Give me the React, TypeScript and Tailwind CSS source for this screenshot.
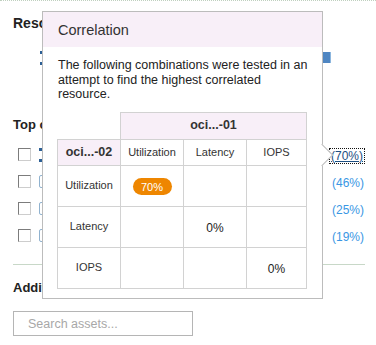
import React from 'react'

const rows = [
  { pct: '(70%)', active: true },
  { pct: '(46%)', active: false },
  { pct: '(25%)', active: false },
  { pct: '(19%)', active: false },
]

const metrics = ['Utilization', 'Latency', 'IOPS']

// values shown in the matrix, keyed "row-col"
const cells: Record<string, { text: string; badge?: boolean }> = {
  '0-0': { text: '70%', badge: true },
  '1-1': { text: '0%' },
  '2-2': { text: '0%' },
}

function Checkbox() {
  return (
    <span className="block w-[13px] h-[13px] border border-[#7c7c7c] border-r-[#cdcdcd] border-b-[#cdcdcd] bg-white" />
  )
}

function Marker() {
  return (
    <span className="flex flex-col justify-between w-[4px] h-[14px]">
      <span className="block w-[3px] h-[3px] bg-[#2c5f95]" />
      <span className="block w-[3px] h-[3px] bg-[#2c5f95]" />
    </span>
  )
}

function CorrelationPopover() {
  return (
    <div className="absolute left-[42px] top-[10px] w-[281px] h-[288px] border border-[#bcbcbc] bg-white">
      {/* Header */}
      <div className="h-[35px] bg-[#f8eff8] pl-[15px] pt-px text-[14.5px] leading-[35px] text-[#333]">
        Correlation
      </div>

      {/* Body */}
      <div className="px-[15px] pt-[11px]">
        <p className="-mr-[3px] text-[12.5px] leading-[14.5px] text-[#222]">
          The following combinations were tested in an attempt to find the highest correlated resource.
        </p>

        <table className="mt-[10px] -ml-px w-[249px] table-fixed border-collapse text-[#333]">
          <colgroup>
            <col className="w-[63px]" />
            <col className="w-[63px]" />
            <col className="w-[63px]" />
            <col className="w-[60px]" />
          </colgroup>
          <tbody>
            <tr className="h-[27px]">
              <td className="border-0" />
              <td colSpan={3} className="border border-[#d2d2d2] bg-[#f8eff8] text-center text-[12.5px] font-bold">
                oci...-01
              </td>
            </tr>
            <tr className="h-[26px]">
              <td className="border border-[#d2d2d2] bg-[#f8eff8] text-center text-[12.5px] font-bold">oci...-02</td>
              {metrics.map((m) => (
                <td key={m} className="border border-[#d2d2d2] text-center text-[11px]">
                  {m}
                </td>
              ))}
            </tr>
            {metrics.map((m, r) => (
              <tr key={m} className="h-[41px]">
                <td className="border border-[#d2d2d2] text-center text-[11px]">{m}</td>
                {metrics.map((_, c) => {
                  const cell = cells[`${r}-${c}`]
                  return (
                    <td key={c} className="border border-[#d2d2d2] text-center align-middle">
                      {cell?.badge ? (
                        <span className="inline-flex items-center justify-center w-[39px] h-[17px] rounded-full bg-[#ee8600] text-[11px] text-white">
                          {cell.text}
                        </span>
                      ) : cell ? (
                        <span className="text-[12px] text-[#222]">{cell.text}</span>
                      ) : null}
                    </td>
                  )
                })}
              </tr>
            ))}
          </tbody>
        </table>
      </div>

      {/* Pointer to the selected percentage */}
      <span className="absolute left-[271px] top-[135px] w-[16px] h-[16px] rotate-45 border-t border-r border-[#bcbcbc] bg-white" />
    </div>
  )
}

export default function App() {
  return (
    <div className="relative w-[376px] h-[345px] overflow-hidden bg-white border-t border-dotted border-[#bfd0bf] font-['Liberation_Sans',Arial,sans-serif] text-[#222]">
      <div className="pl-[13px] pr-[11px] pt-[14px]">
        <h2 className="text-[14px] leading-[16px] font-bold whitespace-nowrap">Resources</h2>

        {/* Bar row */}
        <div className="mt-[21px] h-[11px] flex items-center">
          <span className="ml-[27px]">
            <Marker />
          </span>
          <span className="ml-auto mr-[34px] flex h-[11px] w-[40px]">
            <span className="flex-1 bg-[#4f86c2]" />
            <span className="w-px bg-[#8cb6de]" />
          </span>
        </div>

        <h3 className="mt-[54px] text-[13px] leading-[16px] font-bold whitespace-nowrap">Top correlated</h3>

        <div className="mt-[8px]">
          {rows.map((row, i) => (
            <div key={i} className="h-[27px] flex items-center">
              <span className="ml-[5px]">
                <Checkbox />
              </span>
              <span className="ml-[8px]">
                {row.active ? (
                  <Marker />
                ) : (
                  <span className="block w-[14px] h-[13px] rounded-[2px] border border-[#90b2cf]" />
                )}
              </span>
              <span className="ml-auto">
                {row.active ? (
                  <span className="border border-dotted border-[#111] px-px text-[12px] leading-[13px] text-[#1d4f82] underline">
                    {row.pct}
                  </span>
                ) : (
                  <span className="pr-px text-[12px] text-[#3a97e4]">{row.pct}</span>
                )}
              </span>
            </div>
          ))}
        </div>

        <div className="mt-[15px] border-t border-[#c8d8c8]" />

        <h3 className="mt-[15px] text-[13px] leading-[16px] font-bold whitespace-nowrap">Additional</h3>

        <input
          type="text"
          placeholder="Search assets..."
          className="mt-[15px] block w-[180px] h-[25px] border border-[#b5b5b5] pl-[14px] text-[12.5px] placeholder:text-[#a8a8a8] outline-none"
        />
      </div>

      <CorrelationPopover />
    </div>
  )
}
